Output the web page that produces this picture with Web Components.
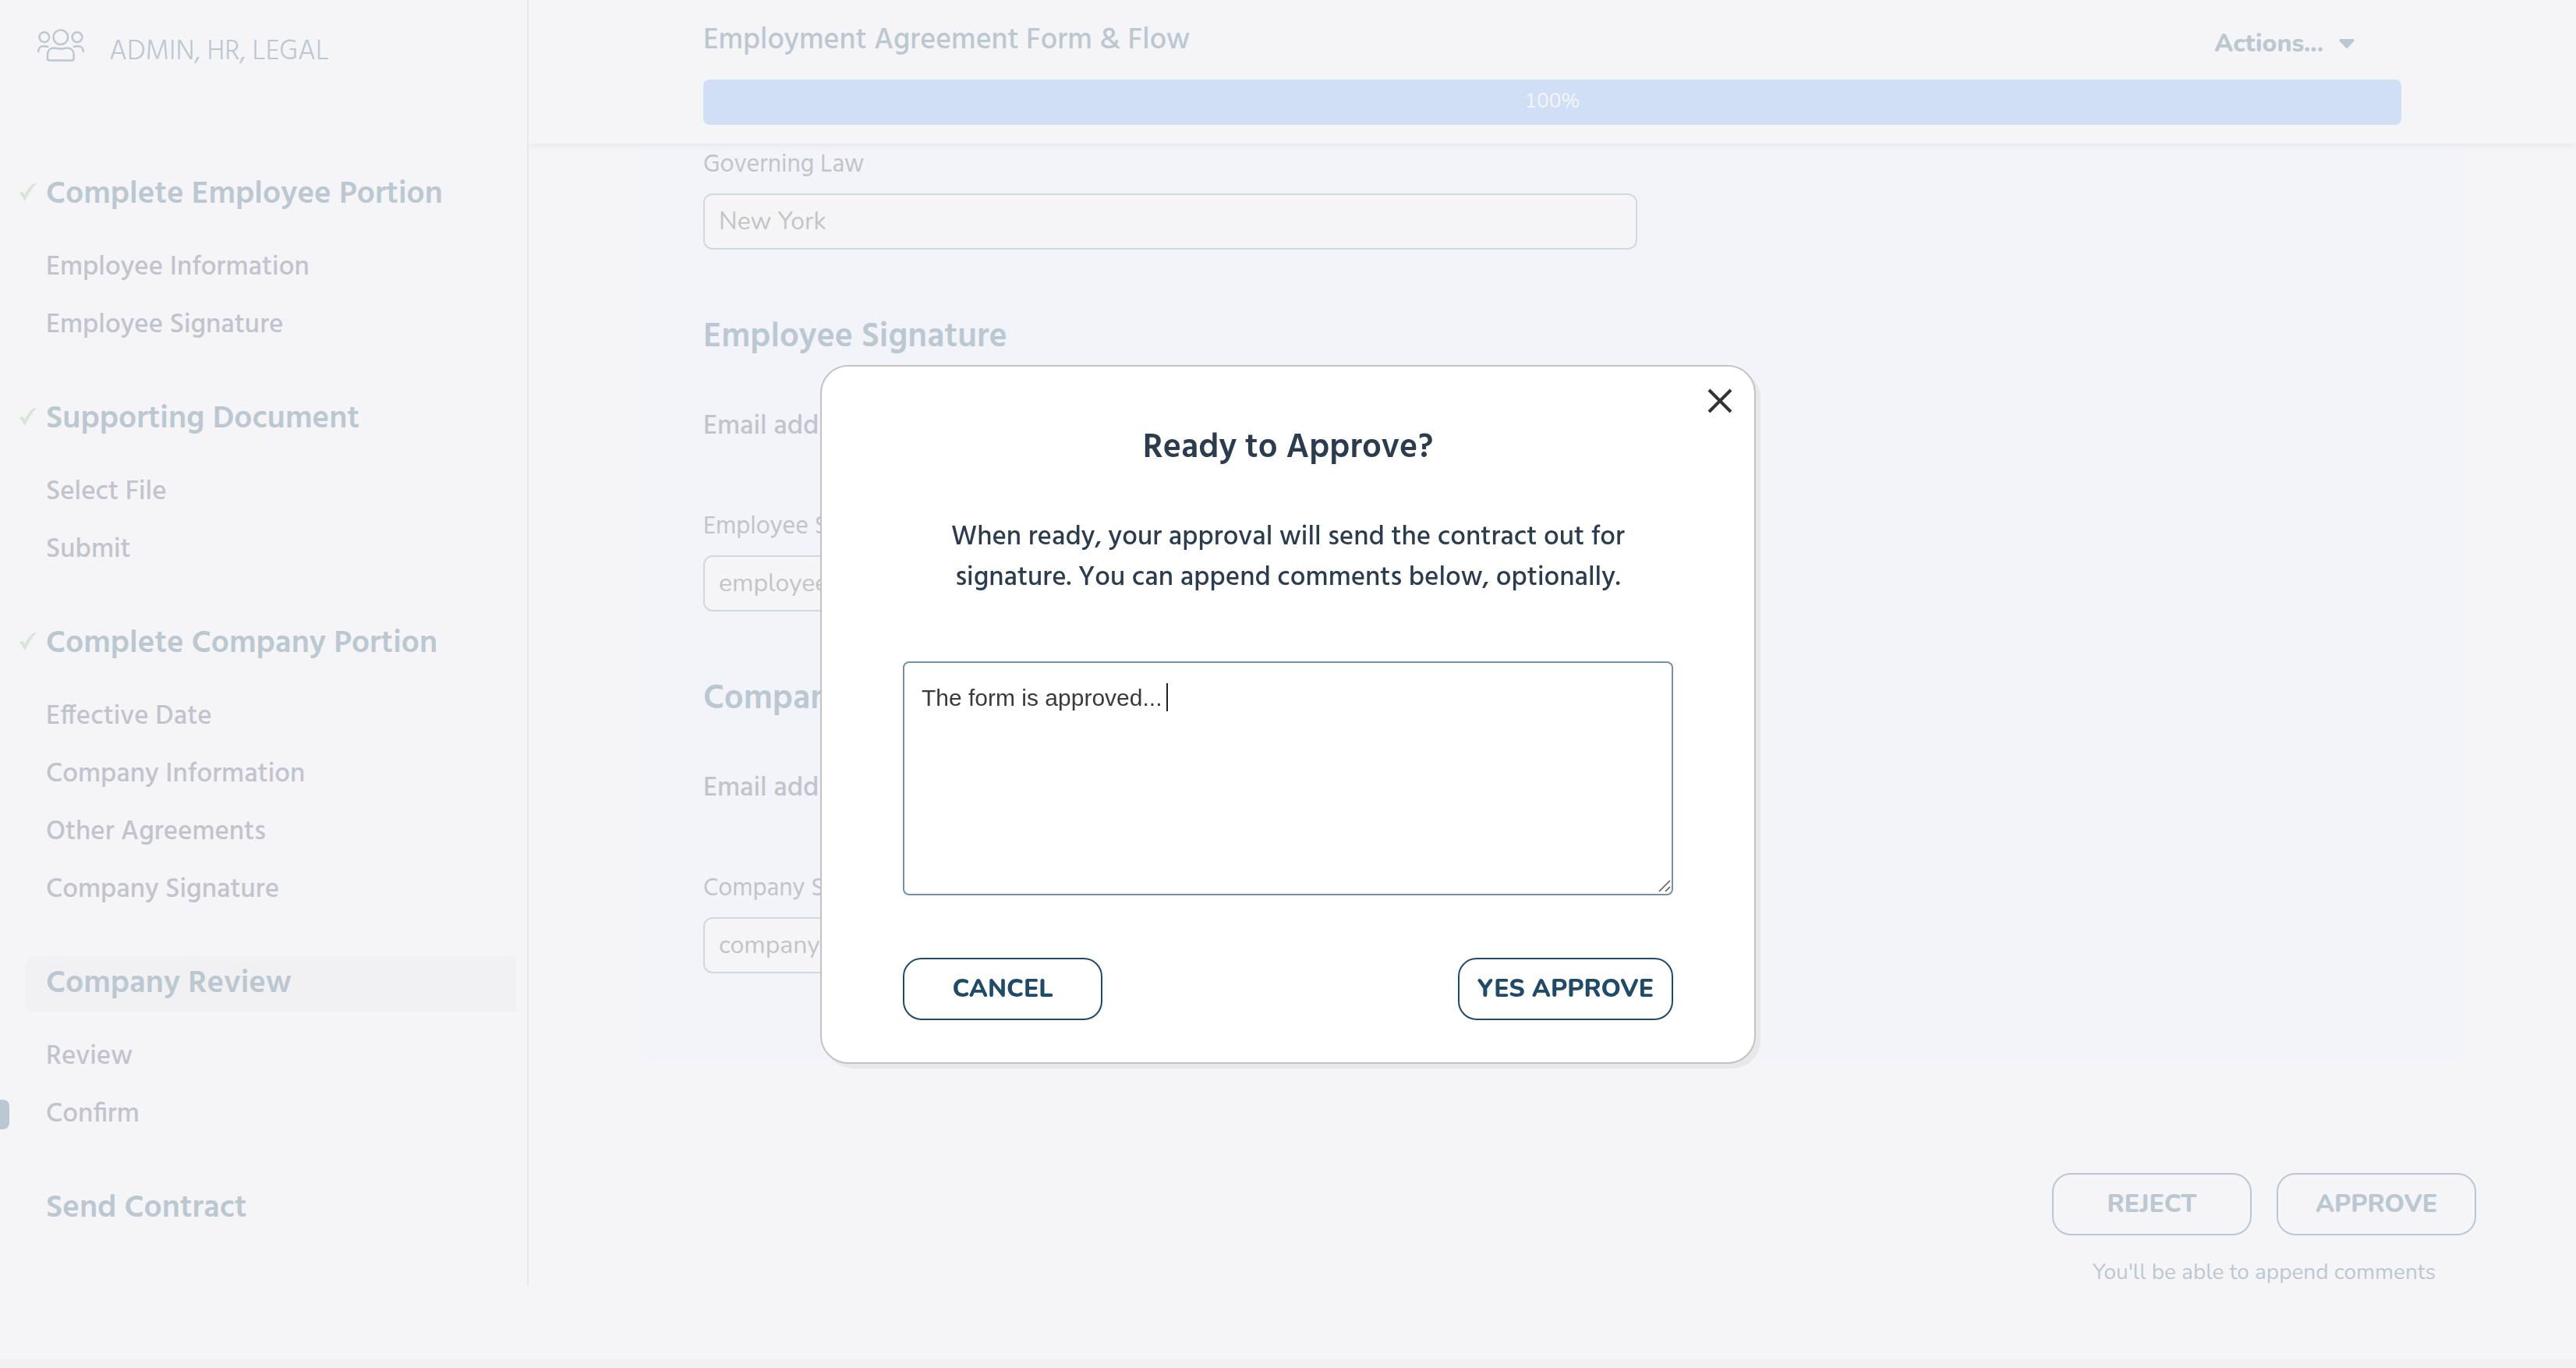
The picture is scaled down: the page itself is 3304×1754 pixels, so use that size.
<!DOCTYPE html>
<html lang="en">
<head>
<meta charset="utf-8">
<meta name="viewport" content="width=device-width, initial-scale=1">
<title>Employment Agreement Form &amp; Flow</title>
<style>
  :root {
    --heading-font: Hind, Lato, "Open Sans", sans-serif;
    --body-font: Nunito, Lato, "Open Sans", sans-serif;
    --bg: #f5f5f8;
    --card: #f2f4f9;
    --muted: #bcc8d1;
    --muted-text: #c1c4cd;
    --line: #e6e7ea;
    --field-line: #d0d9de;
    --ink: #2c3c4f;
    --action: #1f4b69;
  }
  body { margin: 0; background: var(--bg); font-family: var(--heading-font); }
</style>
</head>
<body>

<app-shell>
  <team-badge slot="side">ADMIN, HR, LEGAL</team-badge>
  <nav-section slot="nav" heading="Complete Employee Portion" items="Employee Information|Employee Signature" done></nav-section>
  <nav-section slot="nav" heading="Supporting Document" items="Select File|Submit" done></nav-section>
  <nav-section slot="nav" heading="Complete Company Portion" items="Effective Date|Company Information|Other Agreements|Company Signature" done></nav-section>
  <nav-section slot="nav" heading="Company Review" items="Review|Confirm" active="Confirm"></nav-section>
  <nav-section slot="nav" heading="Send Contract"></nav-section>

  <page-header slot="header" progress="100">Employment Agreement Form &amp; Flow</page-header>

  <form-card>
    <text-field label="Governing Law" value="New York"></text-field>
    <form-section heading="Employee Signature">
      <span slot="hint">Email address</span>
      <text-field label="Employee Signer" value="employee"></text-field>
    </form-section>
    <form-section heading="Company Signature">
      <span slot="hint">Email address</span>
      <text-field label="Company Signer" value="company"></text-field>
    </form-section>
  </form-card>
  <review-actions note="You'll be able to append comments">
    <pill-button tone="muted">REJECT</pill-button>
    <pill-button tone="muted">APPROVE</pill-button>
  </review-actions>
</app-shell>

<approve-dialog heading="Ready to Approve?" comment="The form is approved...">
  When ready, your approval will send the contract out for signature. You can append comments below, optionally.
  <pill-button slot="actions">CANCEL</pill-button>
  <pill-button slot="actions">YES APPROVE</pill-button>
</approve-dialog>

<script>
const define = (name, render) => customElements.define(name, class extends HTMLElement {
  connectedCallback() {
    if (this.shadowRoot) return;
    this.attachShadow({ mode: "open" }).innerHTML = render(this);
  }
});
const attr = (el, name) => el.getAttribute(name) || "";

define("app-shell", () => `
  <style>
    :host { display: flex; flex-direction: column; min-height: 100vh; background: var(--bg); }
    .columns { display: flex; flex: 1; align-items: flex-start; }
    aside { box-sizing: border-box; width: 678px; flex: none; padding: 37px 14px 64px 0; border-right: 2px solid var(--line); position: relative; z-index: 1; background: var(--bg); }
    nav { display: flex; flex-direction: column; gap: 49px; margin-top: 118px; }
    .content { flex: 1; min-width: 0; }
    main { display: block; padding-bottom: 48px; }
    footer { height: 12px; background: #f1f1f3; }
  </style>
  <div class="columns">
    <aside><slot name="side"></slot><nav><slot name="nav"></slot></nav></aside>
    <div class="content"><slot name="header"></slot><main><slot></slot></main></div>
  </div>
  <footer></footer>`);

define("team-badge", () => `
  <style>
    :host { display: flex; align-items: flex-start; gap: 32px; padding-left: 48px; color: var(--muted); font: 300 36px/60px var(--heading-font); }
    svg { width: 60px; height: 42px; flex: none; }
  </style>
  <svg viewBox="0 0 60 42" fill="none" stroke="currentColor" stroke-width="2.5" stroke-linecap="round" aria-hidden="true">
    <circle cx="29.8" cy="10.7" r="9.3"/>
    <circle cx="8.8" cy="10.6" r="6.4"/>
    <circle cx="51" cy="10.6" r="6.4"/>
    <path d="M1.3 29v-.6c0-3.4 2.4-6.2 6-6.2 2.4 0 4.2.1 6 .5M58.7 29v-.6c0-3.4-2.4-6.2-6-6.2-2.4 0-4.2.1-6 .5"/>
    <path d="M13 38.300V33c0-5 3.200-8.500 8-8.500 3.500 0 5 1.100 8.800 1.100s5.300-1.100 8.800-1.100c4.800 0 8 3.500 8 8.500v5.300c0 1.500-.8 2.300-2.300 2.300H15.300c-1.500 0-2.300-.8-2.300-2.300z"/>
  </svg>
  <span><slot></slot></span>`);

define("nav-section", el => {
  const active = attr(el, "active");
  const items = attr(el, "items").split("|").filter(Boolean);
  return `
  <style>
    :host { display: block; }
    h2 { display: flex; align-items: center; height: 70px; margin: 0 0 0 32px; padding-left: 27px; border-radius: 12px 0 0 12px; color: var(--muted); font: 600 41px/70px var(--heading-font); }
    h2.current { background: #f1f1f4; }
    h2 svg { width: 22px; height: 30px; margin: 0 12px 0 -34px; fill: #d6e6d9; }
    ul { list-style: none; margin: 21px 0 0; padding: 0; }
    li { display: flex; align-items: center; height: 74px; padding-left: 59px; }
    li.current { padding-left: 0; gap: 47px; }
    li.current::before { content: ""; width: 12px; height: 38px; border-radius: 0 8px 8px 0; background: var(--muted); }
    a { color: var(--muted-text); text-decoration: none; font: 500 35px/74px var(--heading-font); }
  </style>
  <h2 class="${active ? "current" : ""}">${el.hasAttribute("done") ? `<svg viewBox="0 0 22 30" role="img" aria-label="Done"><path d="M0 12.5 3.800 10.600 6.700 14.600C9.500 8.700 13.500 3.600 18 .4L22 0C16 6.300 10.800 13.800 7.200 22.400H6.200C4.400 18.300 2.500 15.300 0 12.500z"/></svg>` : ""}<span>${attr(el, "heading")}</span></h2>
  ${items.length ? `<ul>${items.map(t => `<li class="${t === active ? "current" : ""}"><a href="#">${t}</a></li>`).join("")}</ul>` : ""}`;
});

define("page-header", el => `
  <style>
    :host { display: block; position: relative; padding: 23px 224px 24px; background: var(--bg); box-shadow: 0 5px 8px rgba(0, 0, 0, .04); }
    .row { display: flex; justify-content: space-between; align-items: flex-start; height: 79px; padding-right: 60px; }
    h1 { margin: 0; color: var(--muted); font: 500 38px/60px var(--heading-font); }
    button { display: flex; align-items: center; gap: 20px; padding: 0; border: 0; background: none; color: var(--muted); font: 800 32px/66px var(--body-font); }
    svg { width: 20px; height: 12px; fill: currentColor; }
    .bar { height: 58px; border-radius: 8px; background: var(--bg); overflow: hidden; }
    .fill { width: ${attr(el, "progress")}%; height: 58px; background: #d1dff6; color: #f5f5f8; text-align: center; font: 400 26px/56px var(--body-font); }
  </style>
  <div class="row">
    <h1><slot></slot></h1>
    <button type="button" aria-haspopup="menu">Actions... <svg viewBox="0 0 20 12" aria-hidden="true"><path d="M2 0h16c1.5 0 2.2 1.6 1.2 2.7l-7.900 8.500c-.7.700-1.900.7-2.600 0L.8 2.700C-.2 1.600.5 0 2 0z"/></svg></button>
  </div>
  <div class="bar" role="progressbar" aria-valuenow="${attr(el, "progress")}" aria-label="Form progress"><div class="fill">${attr(el, "progress")}%</div></div>`);

define("form-card", () => `
  <style>
    :host { display: block; margin: 0 146px 0 144px; padding: 0 80px 112px; border-radius: 0 0 12px 12px; background: var(--card); }
  </style><slot></slot>`);

define("form-section", el => `
  <style>
    :host { display: block; margin-top: 83px; }
    h2 { margin: 0; color: var(--muted); font: 600 44px/60px var(--heading-font); }
    p { margin: 56px 0 73px; color: var(--muted-text); font: 500 35px/56px var(--heading-font); }
  </style>
  <h2>${attr(el, "heading")}</h2><p><slot name="hint"></slot></p><slot></slot>`);

define("text-field", el => `
  <style>
    :host { display: block; max-width: 1198px; }
    label { display: block; margin-bottom: 8px; color: var(--muted-text); font: 400 32px/56px var(--heading-font); }
    input { display: block; box-sizing: border-box; width: 100%; height: 72px; padding: 0 18px 1px; border: 2px solid var(--field-line); border-radius: 12px; outline: 0; background: #f5f5f7; color: #c4c4c5; font: 400 32px var(--body-font); }
  </style>
  <label for="field">${attr(el, "label")}</label><input id="field" type="text" value="${attr(el, "value")}">`);

define("pill-button", el => `
  <style>
    :host { display: block; }
    button { display: block; box-sizing: border-box; min-width: 256px; height: 80px; padding: 0 23px 2px; border: 2px solid; border-radius: 24px; background: none; color: var(--${attr(el, "tone") || "action"}); font: 800 32px var(--body-font); }
  </style>
  <button type="button"><slot></slot></button>`);

define("review-actions", el => `
  <style>
    :host { display: flex; flex-direction: column; align-items: flex-end; margin: 144px 128px 0 0; }
    .group { display: flex; flex-direction: column; align-items: center; gap: 27px; }
    .buttons { display: flex; gap: 32px; }
    p { margin: 0; color: var(--muted); font: 400 28px/40px var(--body-font); }
  </style>
  <div class="group"><div class="buttons"><slot></slot></div><p>${attr(el, "note")}</p></div>`);

define("approve-dialog", el => `
  <style>
    :host { position: fixed; inset: 0; z-index: 2; display: flex; justify-content: center; align-items: flex-start; padding: 468px 24px 0; }
    section { position: relative; box-sizing: border-box; width: 1200px; padding: 75px 104px 54px; border: 2px solid #c3c3c3; border-radius: 36px; background: #fff; box-shadow: 6px 6px 0 #e8e8ea; color: var(--ink); text-align: center; }
    .close { position: absolute; top: 28px; right: 28px; width: 32px; height: 32px; padding: 0; border: 0; background: none; color: #333; }
    .close svg { display: block; width: 32px; height: 32px; }
    h2 { margin: 0 0 58px; font: 600 44px/60px var(--heading-font); }
    p { margin: 0 0 81px; font: 500 35px/52px var(--heading-font); }
    .comment { position: relative; margin-bottom: 80px; }
    textarea { display: block; box-sizing: border-box; width: 100%; height: 300px; padding: 21px 22px; border: 2px solid #7390a5; border-radius: 8px; outline: 0; resize: none; background: #fff; color: #3a3a3a; font: 400 30px/48px "Liberation Sans", Arial, sans-serif; }
    .caret { position: absolute; left: 338px; top: 28px; width: 2px; height: 36px; background: #222; }
    .grip { position: absolute; right: 3px; bottom: 4px; width: 16px; height: 16px; }
    .actions { display: flex; justify-content: space-between; }
  </style>
  <section role="dialog" aria-modal="true" aria-labelledby="title">
    <button class="close" type="button" aria-label="Close"><svg viewBox="0 0 32 32" fill="none" stroke="currentColor" stroke-width="4" aria-hidden="true"><path d="M2 2l28 28M30 2L2 30"/></svg></button>
    <h2 id="title">${attr(el, "heading")}</h2>
    <p><slot></slot></p>
    <div class="comment">
      <textarea aria-label="Comments">${attr(el, "comment")}</textarea>
      <span class="caret"></span>
      <svg class="grip" viewBox="0 0 16 16" stroke="#555" stroke-width="1.5" aria-hidden="true"><path d="M1 15L15 1M9 15l6-6"/></svg>
    </div>
    <div class="actions"><slot name="actions"></slot></div>
  </section>`);
</script>
</body>
</html>
